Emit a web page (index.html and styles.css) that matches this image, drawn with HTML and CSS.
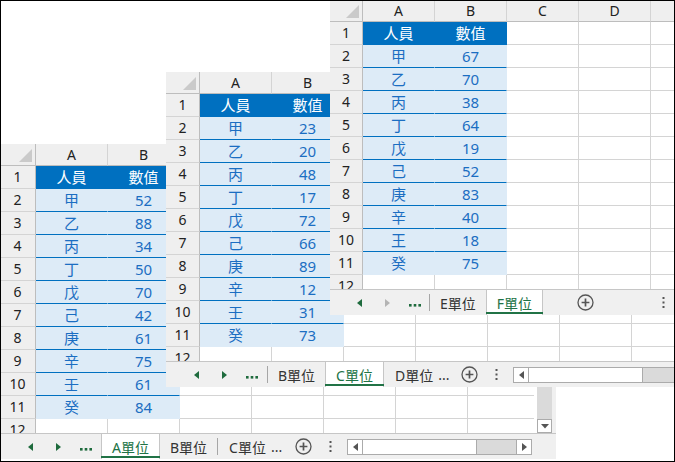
FILE: index.html
```html
<!DOCTYPE html>
<html lang="zh-Hant">
<head>
<meta charset="utf-8">
<title>單位</title>
<link rel="stylesheet" href="styles.css">
</head>
<body>
<div class="frame">

  <!-- Window A -->
  <section class="win win-a">
    <div class="sheet">
      <div class="grid">
        <div class="row head"><div class="rn corner"></div><div class="col">A</div><div class="col">B</div><div class="col">C</div><div class="col">D</div><div class="col">E</div><div class="col">F</div><div class="col">G</div></div>
        <div class="row"><div class="rn">1</div><div class="cell th">人員</div><div class="cell th">數值</div><div class="rest"></div></div>
        <div class="row"><div class="rn">2</div><div class="cell td">甲</div><div class="cell td">52</div><div class="rest"></div></div>
        <div class="row"><div class="rn">3</div><div class="cell td">乙</div><div class="cell td">88</div><div class="rest"></div></div>
        <div class="row"><div class="rn">4</div><div class="cell td">丙</div><div class="cell td">34</div><div class="rest"></div></div>
        <div class="row"><div class="rn">5</div><div class="cell td">丁</div><div class="cell td">50</div><div class="rest"></div></div>
        <div class="row"><div class="rn">6</div><div class="cell td">戊</div><div class="cell td">70</div><div class="rest"></div></div>
        <div class="row"><div class="rn">7</div><div class="cell td">己</div><div class="cell td">42</div><div class="rest"></div></div>
        <div class="row"><div class="rn">8</div><div class="cell td">庚</div><div class="cell td">61</div><div class="rest"></div></div>
        <div class="row"><div class="rn">9</div><div class="cell td">辛</div><div class="cell td">75</div><div class="rest"></div></div>
        <div class="row"><div class="rn">10</div><div class="cell td">壬</div><div class="cell td">61</div><div class="rest"></div></div>
        <div class="row"><div class="rn">11</div><div class="cell td end">癸</div><div class="cell td end">84</div><div class="rest"></div></div>
        <div class="row"><div class="rn">12</div><div class="cell"></div><div class="cell"></div><div class="rest"></div></div>
      </div>
      <div class="vscroll">
        <div class="vs">
          <div class="vs-btn"><svg width="8" height="5" viewBox="0 0 8 5"><polygon points="0,0 8,0 4,4.5" fill="#555"/></svg></div>
          <div class="vs-track"></div>
          <div class="vs-btn"><svg width="8" height="5" viewBox="0 0 8 5"><polygon points="0,0 8,0 4,4.5" fill="#555"/></svg></div>
        </div>
      </div>
    </div>
    <div class="tabbar">
      <div class="nav">
        <span class="nb"><svg width="5" height="8" viewBox="0 0 5 8"><polygon points="5,0 5,8 0,4" fill="#1e6b3d"/></svg></span>
        <span class="nb"><svg width="5" height="8" viewBox="0 0 5 8"><polygon points="0,0 0,8 5,4" fill="#1e6b3d"/></svg></span>
        <span class="nb dots"><svg width="12" height="3" viewBox="0 0 12 3"><rect x="0" y="0" width="2.6" height="2.6" fill="#1e6b3d"/><rect x="4.7" y="0" width="2.6" height="2.6" fill="#1e6b3d"/><rect x="9.4" y="0" width="2.6" height="2.6" fill="#1e6b3d"/></svg></span>
      </div>
      <div class="tab active">A單位</div>
      <div class="tab">B單位</div>
      <div class="sep"></div>
      <div class="tab cut">C單位</div>
      <div class="more">...</div>
      <div class="add"><svg width="17" height="17" viewBox="0 0 17 17"><circle cx="8.5" cy="8.5" r="7.5" fill="none" stroke="#555" stroke-width="1.3"/><path d="M8.5 4.6v7.8M4.6 8.5h7.8" stroke="#555" stroke-width="1.7"/></svg></div>
      <div class="kebab"><svg width="3" height="11" viewBox="0 0 3 11"><rect x="0.5" y="0" width="2" height="2" fill="#555"/><rect x="0.5" y="4.5" width="2" height="2" fill="#555"/><rect x="0.5" y="9" width="2" height="2" fill="#555"/></svg></div>
      <div class="hs hs-a">
        <div class="hs-btn l"><svg width="5" height="8" viewBox="0 0 5 8"><polygon points="5,0 5,8 0,4" fill="#555"/></svg></div>
        <div class="hs-thumb"></div>
        <div class="hs-track"></div>
        <div class="hs-btn r"><svg width="5" height="8" viewBox="0 0 5 8"><polygon points="0,0 0,8 5,4" fill="#555"/></svg></div>
      </div>
    </div>
  </section>

  <!-- Window B -->
  <section class="win win-b">
    <div class="sheet">
      <div class="grid">
        <div class="row head"><div class="rn corner"></div><div class="col">A</div><div class="col">B</div><div class="col">C</div><div class="col">D</div><div class="col">E</div><div class="col">F</div><div class="col">G</div></div>
        <div class="row"><div class="rn">1</div><div class="cell th">人員</div><div class="cell th">數值</div><div class="rest"></div></div>
        <div class="row"><div class="rn">2</div><div class="cell td">甲</div><div class="cell td">23</div><div class="rest"></div></div>
        <div class="row"><div class="rn">3</div><div class="cell td">乙</div><div class="cell td">20</div><div class="rest"></div></div>
        <div class="row"><div class="rn">4</div><div class="cell td">丙</div><div class="cell td">48</div><div class="rest"></div></div>
        <div class="row"><div class="rn">5</div><div class="cell td">丁</div><div class="cell td">17</div><div class="rest"></div></div>
        <div class="row"><div class="rn">6</div><div class="cell td">戊</div><div class="cell td">72</div><div class="rest"></div></div>
        <div class="row"><div class="rn">7</div><div class="cell td">己</div><div class="cell td">66</div><div class="rest"></div></div>
        <div class="row"><div class="rn">8</div><div class="cell td">庚</div><div class="cell td">89</div><div class="rest"></div></div>
        <div class="row"><div class="rn">9</div><div class="cell td">辛</div><div class="cell td">12</div><div class="rest"></div></div>
        <div class="row"><div class="rn">10</div><div class="cell td">壬</div><div class="cell td">31</div><div class="rest"></div></div>
        <div class="row"><div class="rn">11</div><div class="cell td end">癸</div><div class="cell td end">73</div><div class="rest"></div></div>
        <div class="row"><div class="rn">12</div><div class="cell"></div><div class="cell"></div><div class="rest"></div></div>
      </div>
    </div>
    <div class="tabbar">
      <div class="nav">
        <span class="nb"><svg width="5" height="8" viewBox="0 0 5 8"><polygon points="5,0 5,8 0,4" fill="#1e6b3d"/></svg></span>
        <span class="nb"><svg width="5" height="8" viewBox="0 0 5 8"><polygon points="0,0 0,8 5,4" fill="#1e6b3d"/></svg></span>
        <span class="nb dots"><svg width="12" height="3" viewBox="0 0 12 3"><rect x="0" y="0" width="2.6" height="2.6" fill="#1e6b3d"/><rect x="4.7" y="0" width="2.6" height="2.6" fill="#1e6b3d"/><rect x="9.4" y="0" width="2.6" height="2.6" fill="#1e6b3d"/></svg></span>
      </div>
      <div class="sep"></div>
      <div class="tab">B單位</div>
      <div class="tab active">C單位</div>
      <div class="tab cut">D單位</div>
      <div class="more">...</div>
      <div class="add"><svg width="17" height="17" viewBox="0 0 17 17"><circle cx="8.5" cy="8.5" r="7.5" fill="none" stroke="#555" stroke-width="1.3"/><path d="M8.5 4.6v7.8M4.6 8.5h7.8" stroke="#555" stroke-width="1.7"/></svg></div>
      <div class="kebab"><svg width="3" height="11" viewBox="0 0 3 11"><rect x="0.5" y="0" width="2" height="2" fill="#555"/><rect x="0.5" y="4.5" width="2" height="2" fill="#555"/><rect x="0.5" y="9" width="2" height="2" fill="#555"/></svg></div>
      <div class="hs hs-b">
        <div class="hs-btn l"><svg width="5" height="8" viewBox="0 0 5 8"><polygon points="5,0 5,8 0,4" fill="#555"/></svg></div>
        <div class="hs-thumb"></div>
        <div class="hs-track"></div>
      </div>
    </div>
  </section>

  <!-- Window C -->
  <section class="win win-c">
    <div class="sheet">
      <div class="grid">
        <div class="row head"><div class="rn corner"></div><div class="col">A</div><div class="col">B</div><div class="col">C</div><div class="col">D</div><div class="col"></div></div>
        <div class="row"><div class="rn">1</div><div class="cell th">人員</div><div class="cell th">數值</div><div class="rest"></div></div>
        <div class="row"><div class="rn">2</div><div class="cell td">甲</div><div class="cell td">67</div><div class="rest"></div></div>
        <div class="row"><div class="rn">3</div><div class="cell td">乙</div><div class="cell td">70</div><div class="rest"></div></div>
        <div class="row"><div class="rn">4</div><div class="cell td">丙</div><div class="cell td">38</div><div class="rest"></div></div>
        <div class="row"><div class="rn">5</div><div class="cell td">丁</div><div class="cell td">64</div><div class="rest"></div></div>
        <div class="row"><div class="rn">6</div><div class="cell td">戊</div><div class="cell td">19</div><div class="rest"></div></div>
        <div class="row"><div class="rn">7</div><div class="cell td">己</div><div class="cell td">52</div><div class="rest"></div></div>
        <div class="row"><div class="rn">8</div><div class="cell td">庚</div><div class="cell td">83</div><div class="rest"></div></div>
        <div class="row"><div class="rn">9</div><div class="cell td">辛</div><div class="cell td">40</div><div class="rest"></div></div>
        <div class="row"><div class="rn">10</div><div class="cell td">王</div><div class="cell td">18</div><div class="rest"></div></div>
        <div class="row"><div class="rn">11</div><div class="cell td end">癸</div><div class="cell td end">75</div><div class="rest"></div></div>
        <div class="row"><div class="rn">12</div><div class="cell"></div><div class="cell"></div><div class="rest"></div></div>
      </div>
    </div>
    <div class="tabbar">
      <div class="nav">
        <span class="nb"><svg width="5" height="8" viewBox="0 0 5 8"><polygon points="5,0 5,8 0,4" fill="#1e6b3d"/></svg></span>
        <span class="nb"><svg width="5" height="8" viewBox="0 0 5 8"><polygon points="0,0 0,8 5,4" fill="#b4b4b4"/></svg></span>
        <span class="nb dots"><svg width="12" height="3" viewBox="0 0 12 3"><rect x="0" y="0" width="2.6" height="2.6" fill="#1e6b3d"/><rect x="4.7" y="0" width="2.6" height="2.6" fill="#1e6b3d"/><rect x="9.4" y="0" width="2.6" height="2.6" fill="#1e6b3d"/></svg></span>
      </div>
      <div class="sep"></div>
      <div class="tab">E單位</div>
      <div class="tab active">F單位</div>
      <div class="add"><svg width="17" height="17" viewBox="0 0 17 17"><circle cx="8.5" cy="8.5" r="7.5" fill="none" stroke="#555" stroke-width="1.3"/><path d="M8.5 4.6v7.8M4.6 8.5h7.8" stroke="#555" stroke-width="1.7"/></svg></div>
      <div class="kebab"><svg width="3" height="11" viewBox="0 0 3 11"><rect x="0.5" y="0" width="2" height="2" fill="#555"/><rect x="0.5" y="4.5" width="2" height="2" fill="#555"/><rect x="0.5" y="9" width="2" height="2" fill="#555"/></svg></div>
    </div>
  </section>

</div>
</body>
</html>
```

FILE: styles.css
```css
html, body {
  margin: 0;
  padding: 0;
  background: #fff;
}

.frame {
  position: relative;
  width: 675px;
  height: 462px;
  box-sizing: border-box;
  border: 1px solid #000;
  overflow: hidden;
  background: #fff;
  font-family: "Noto Sans", "Noto Sans CJK TC", sans-serif;
}

/* windows on the canvas */
.win {
  position: absolute;
  display: flex;
  flex-direction: column;
  background: #fff;
}
.win-a { left: -1px; top: 143px; width: 556px; --rn: 36px; }
.win-b { left: 165px; top: 71px; width: 530px; --rn: 34px; }
.win-c { left: 329px; top: -1px; width: 360px; --rn: 33px; }

.sheet {
  display: flex;
  height: 289px;
  flex: none;
}

.grid {
  flex: 1;
  min-width: 0;
  overflow: hidden;
  display: flex;
  flex-direction: column;
}

.row {
  display: flex;
  height: 23px;
  flex: none;
}
.row.head { height: 22px; }

.rn {
  width: var(--rn);
  flex: none;
  box-sizing: border-box;
  background: #efefef;
  border-right: 1px solid #bdbdbd;
  border-bottom: 1px solid #d4d4d4;
  text-align: center;
  font-size: 14px;
  line-height: 22px;
  color: #222;
}
.head .rn { border-bottom-color: #bdbdbd; }

.corner { position: relative; }
.corner::after {
  content: "";
  position: absolute;
  right: 3px;
  bottom: 3px;
  width: 13px;
  height: 13px;
  background: #cacaca;
  clip-path: polygon(100% 0, 100% 100%, 0 100%);
}

.col {
  width: 72px;
  flex: none;
  box-sizing: border-box;
  background: #efefef;
  border-right: 1px solid #d4d4d4;
  border-bottom: 1px solid #bdbdbd;
  text-align: center;
  font-size: 14px;
  line-height: 21px;
  color: #222;
}

.cell {
  width: 72px;
  flex: none;
  box-sizing: border-box;
  border-right: 1px solid #d4d4d4;
  border-bottom: 1px solid #d4d4d4;
  text-align: center;
  font-size: 15px;
  line-height: 22px;
}
.th {
  background: #0070c0;
  border-color: #0070c0;
  color: #fff;
}
.td {
  background: #ddebf7;
  border-right-color: #ddebf7;
  border-bottom-color: #0070c0;
  color: #1b6ec2;
}
.td.end { border-bottom-color: #ddebf7; }

.rest {
  flex: 1;
  min-width: 0;
  box-sizing: border-box;
  border-bottom: 1px solid #d4d4d4;
  background: repeating-linear-gradient(to right, transparent 0 71px, #d4d4d4 71px 72px);
}

/* vertical scrollbar (window A) */
.vscroll {
  width: 22px;
  flex: none;
  box-sizing: border-box;
  border-left: 3px solid #fff;
  padding-right: 4px;
  background: #f0f0f0;
}
.vs {
  height: 100%;
  display: flex;
  flex-direction: column;
  background: #dadada;
}
.vs-track { flex: 1; }
.vs-btn {
  height: 14px;
  flex: none;
  box-sizing: border-box;
  background: #fff;
  border: 1px solid #ababab;
  display: flex;
  align-items: center;
  justify-content: center;
}
.vs-btn:first-child svg { transform: rotate(180deg); }

/* sheet tab bar */
.tabbar {
  height: 26px;
  flex: none;
  box-sizing: border-box;
  border-top: 1px solid #c6c6c6;
  background: #f0f0f0;
  display: flex;
  align-items: stretch;
  font-family: "Noto Sans", "Noto Sans CJK TC", sans-serif;
  font-size: 14px;
  color: #333;
  white-space: nowrap;
}

.nav {
  width: 101px;
  flex: none;
  box-sizing: border-box;
  padding-left: 16px;
  display: flex;
  align-items: center;
}
.win-c .nav { width: 99px; }
.nb {
  width: 28px;
  display: flex;
  justify-content: center;
  align-items: center;
}
.nb.dots { padding-top: 6px; }

.sep {
  width: 1px;
  height: 17px;
  align-self: center;
  flex: none;
  background: #a6a6a6;
}

.tab {
  flex: none;
  padding: 0 10px;
  display: flex;
  align-items: center;
}
.tab.active {
  position: relative;
  background: #fff;
  border-left: 1px solid #c6c6c6;
  border-right: 1px solid #c6c6c6;
  color: #217346;
}
.tab.active::after {
  content: "";
  position: absolute;
  left: -1px;
  right: -1px;
  bottom: 1px;
  height: 2px;
  background: #217346;
}
.tab.cut { padding: 0 0 0 11px; }

.more {
  flex: none;
  display: flex;
  align-items: center;
  margin-left: 5px;
  color: #333;
}

.add {
  flex: none;
  display: flex;
  align-items: center;
  margin-left: 13px;
}
.win-b .add { margin-left: 12px; }
.win-c .add { margin-left: 34px; }

.kebab {
  flex: none;
  display: flex;
  align-items: center;
  margin-left: 17px;
}
.win-c .kebab { margin-left: 68px; }

/* horizontal scrollbars */
.hs {
  flex: none;
  align-self: center;
  height: 16px;
  box-sizing: border-box;
  border: 1px solid #ababab;
  background: #dadada;
  display: flex;
  margin-left: 15px;
}
.hs-a { width: 185px; }
.hs-b { width: 200px; }
.hs-btn {
  width: 15px;
  flex: none;
  box-sizing: border-box;
  background: #fff;
  display: flex;
  align-items: center;
  justify-content: center;
}
.hs-btn.l { border-right: 1px solid #ababab; }
.hs-btn.r { border-left: 1px solid #ababab; }
.hs-thumb {
  width: 114px;
  flex: none;
  box-sizing: border-box;
  background: #fff;
  border-right: 1px solid #ababab;
}
.hs-track { flex: 1; }
```
